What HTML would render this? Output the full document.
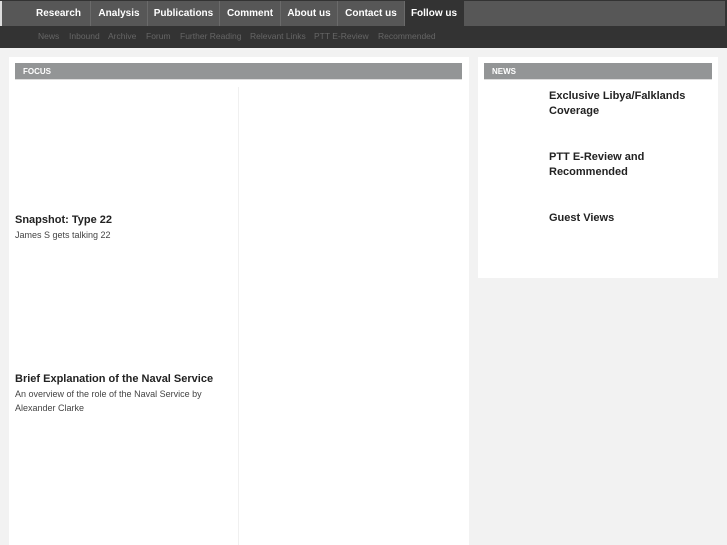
<!DOCTYPE html>
<html><head><style>
*{margin:0;padding:0;box-sizing:border-box}
body{width:727px;height:545px;overflow:hidden;background:#f2f2f2;font-family:"Liberation Sans",Arial,sans-serif;position:relative}
.top{position:absolute;left:0;top:0;width:727px;height:27px;background:#333}
.top .l{position:absolute;left:0;top:1px;width:2px;height:25px;background:#ddd}
.nav{position:absolute;top:1px;height:25px;background:#575757;color:#fff;font-weight:bold;font-size:10px;line-height:25px;text-align:center;border-right:1px solid #6a6a6a}
.sub{position:absolute;left:0;top:27px;width:727px;height:21px;background:#333;font-size:8.5px;color:#666;line-height:19px}
.sub span{position:absolute}
.panel{position:absolute;background:#fff}
.hd{position:absolute;background:#939596;color:#fff;font-size:8px;font-weight:bold;line-height:17px;padding-left:8px;height:17px;border-bottom:1px solid #ddd}
.t{position:absolute;font-weight:bold;font-size:11px;color:#222;line-height:15px}
.d{position:absolute;font-size:9px;color:#444;line-height:14px}
</style></head><body>
<div class="top"><div class="l"></div>
<div class="nav" style="left:2px;width:89px;text-align:right;padding-right:9px">Research</div>
<div class="nav" style="left:91px;width:57px">Analysis</div>
<div class="nav" style="left:148px;width:72px">Publications</div>
<div class="nav" style="left:220px;width:61px">Comment</div>
<div class="nav" style="left:281px;width:57px">About us</div>
<div class="nav" style="left:338px;width:67px">Contact us</div>
<div class="nav" style="left:405px;width:58px;background:#333;border:none">Follow us</div>
<div class="nav" style="left:464px;width:261px;border:none"></div>
</div>
<div class="sub">
<span style="left:38px">News</span><span style="left:69px">Inbound</span><span style="left:108px">Archive</span><span style="left:146px">Forum</span><span style="left:180px">Further Reading</span><span style="left:250px">Relevant Links</span><span style="left:314px">PTT E-Review</span><span style="left:378px">Recommended</span>
</div>
<div class="panel" style="left:9px;top:57px;width:460px;height:488px">
<div class="hd" style="left:6px;top:6px;width:447px">FOCUS</div>
<div style="position:absolute;left:229px;top:30px;width:1px;height:458px;background:#f0f0f0"></div>
<div class="t" style="left:6px;top:156px">Snapshot: Type 22</div>
<div class="d" style="left:6px;top:171px">James S gets talking 22</div>
<div class="t" style="left:6px;top:315px">Brief Explanation of the Naval Service</div>
<div class="d" style="left:6px;top:330px">An overview of the role of the Naval Service by<br>Alexander Clarke</div>
</div>
<div class="panel" style="left:478px;top:57px;width:240px;height:221px">
<div class="hd" style="left:6px;top:6px;width:228px">NEWS</div>
<div class="t" style="left:71px;top:32px">Exclusive Libya/Falklands<br>Coverage</div>
<div class="t" style="left:71px;top:93px">PTT E-Review and<br>Recommended</div>
<div class="t" style="left:71px;top:154px">Guest Views</div>
</div>
</body></html>
